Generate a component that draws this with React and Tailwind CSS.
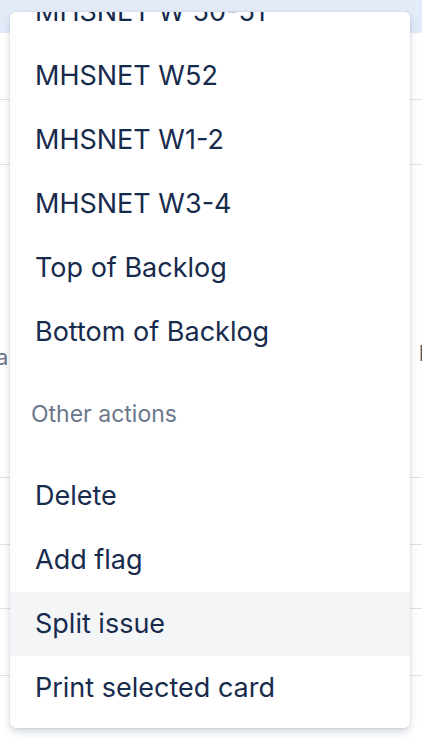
import React from "react";

const sprints = ["MHSNET W 50-51", "MHSNET W52", "MHSNET W1-2", "MHSNET W3-4"];
const moves = ["Top of Backlog", "Bottom of Backlog"];
const others = ["Delete", "Add flag", "Split issue", "Print selected card"];

function MenuItem({ label, active }) {
  return (
    <div
      className={
        active
          ? "flex h-[64px] items-center px-[25px] bg-[#f4f5f7] text-[#172b4d]"
          : "flex h-[64px] items-center px-[25px] text-[#172b4d]"
      }
    >
      {label}
    </div>
  );
}

export default function App() {
  return (
    <div
      className="relative w-[422px] h-[738px] overflow-hidden bg-white"
      style={{ fontFamily: "Inter, 'Liberation Sans', sans-serif" }}
    >
      {/* page behind the menu */}
      <div className="flex flex-col">
        <div className="h-[33px] bg-[#e3ebf9]" />
        <div className="h-[67px] border-b border-[#dfe1e6]" />
        <div className="h-[65px] border-b border-[#dfe1e6]" />
        <div className="relative h-[313px] border-b border-[#dfe1e6]">
          <span className="absolute left-[-4px] top-[176px] text-[22px] text-[#6b778c]">
            a
          </span>
          <span className="absolute right-[-10px] top-[172px] text-[22px] font-semibold text-[#42526e]">
            F
          </span>
        </div>
        <div className="h-[67px] border-b border-[#dfe1e6]" />
        <div className="h-[64px] border-b border-[#dfe1e6]" />
        <div className="h-[67px] border-b border-[#dfe1e6]" />
      </div>

      {/* dropdown menu */}
      <div className="absolute left-[10px] top-[12px] w-[400px] h-[716px] overflow-hidden rounded-[5px] bg-white shadow-[0_4px_10px_-2px_rgba(9,30,66,0.25),0_0_1px_rgba(9,30,66,0.35)] text-[27px]">
        <div className="mt-[-32px] flex flex-col">
          {sprints.map((s) => (
            <MenuItem key={s} label={s} />
          ))}
          {moves.map((s) => (
            <MenuItem key={s} label={s} />
          ))}
          <div className="flex h-[100px] items-center px-[21px] text-[23px] text-[#6b778c]">
            Other actions
          </div>
          {others.map((s) => (
            <MenuItem key={s} label={s} active={s === "Split issue"} />
          ))}
        </div>
      </div>
    </div>
  );
}
